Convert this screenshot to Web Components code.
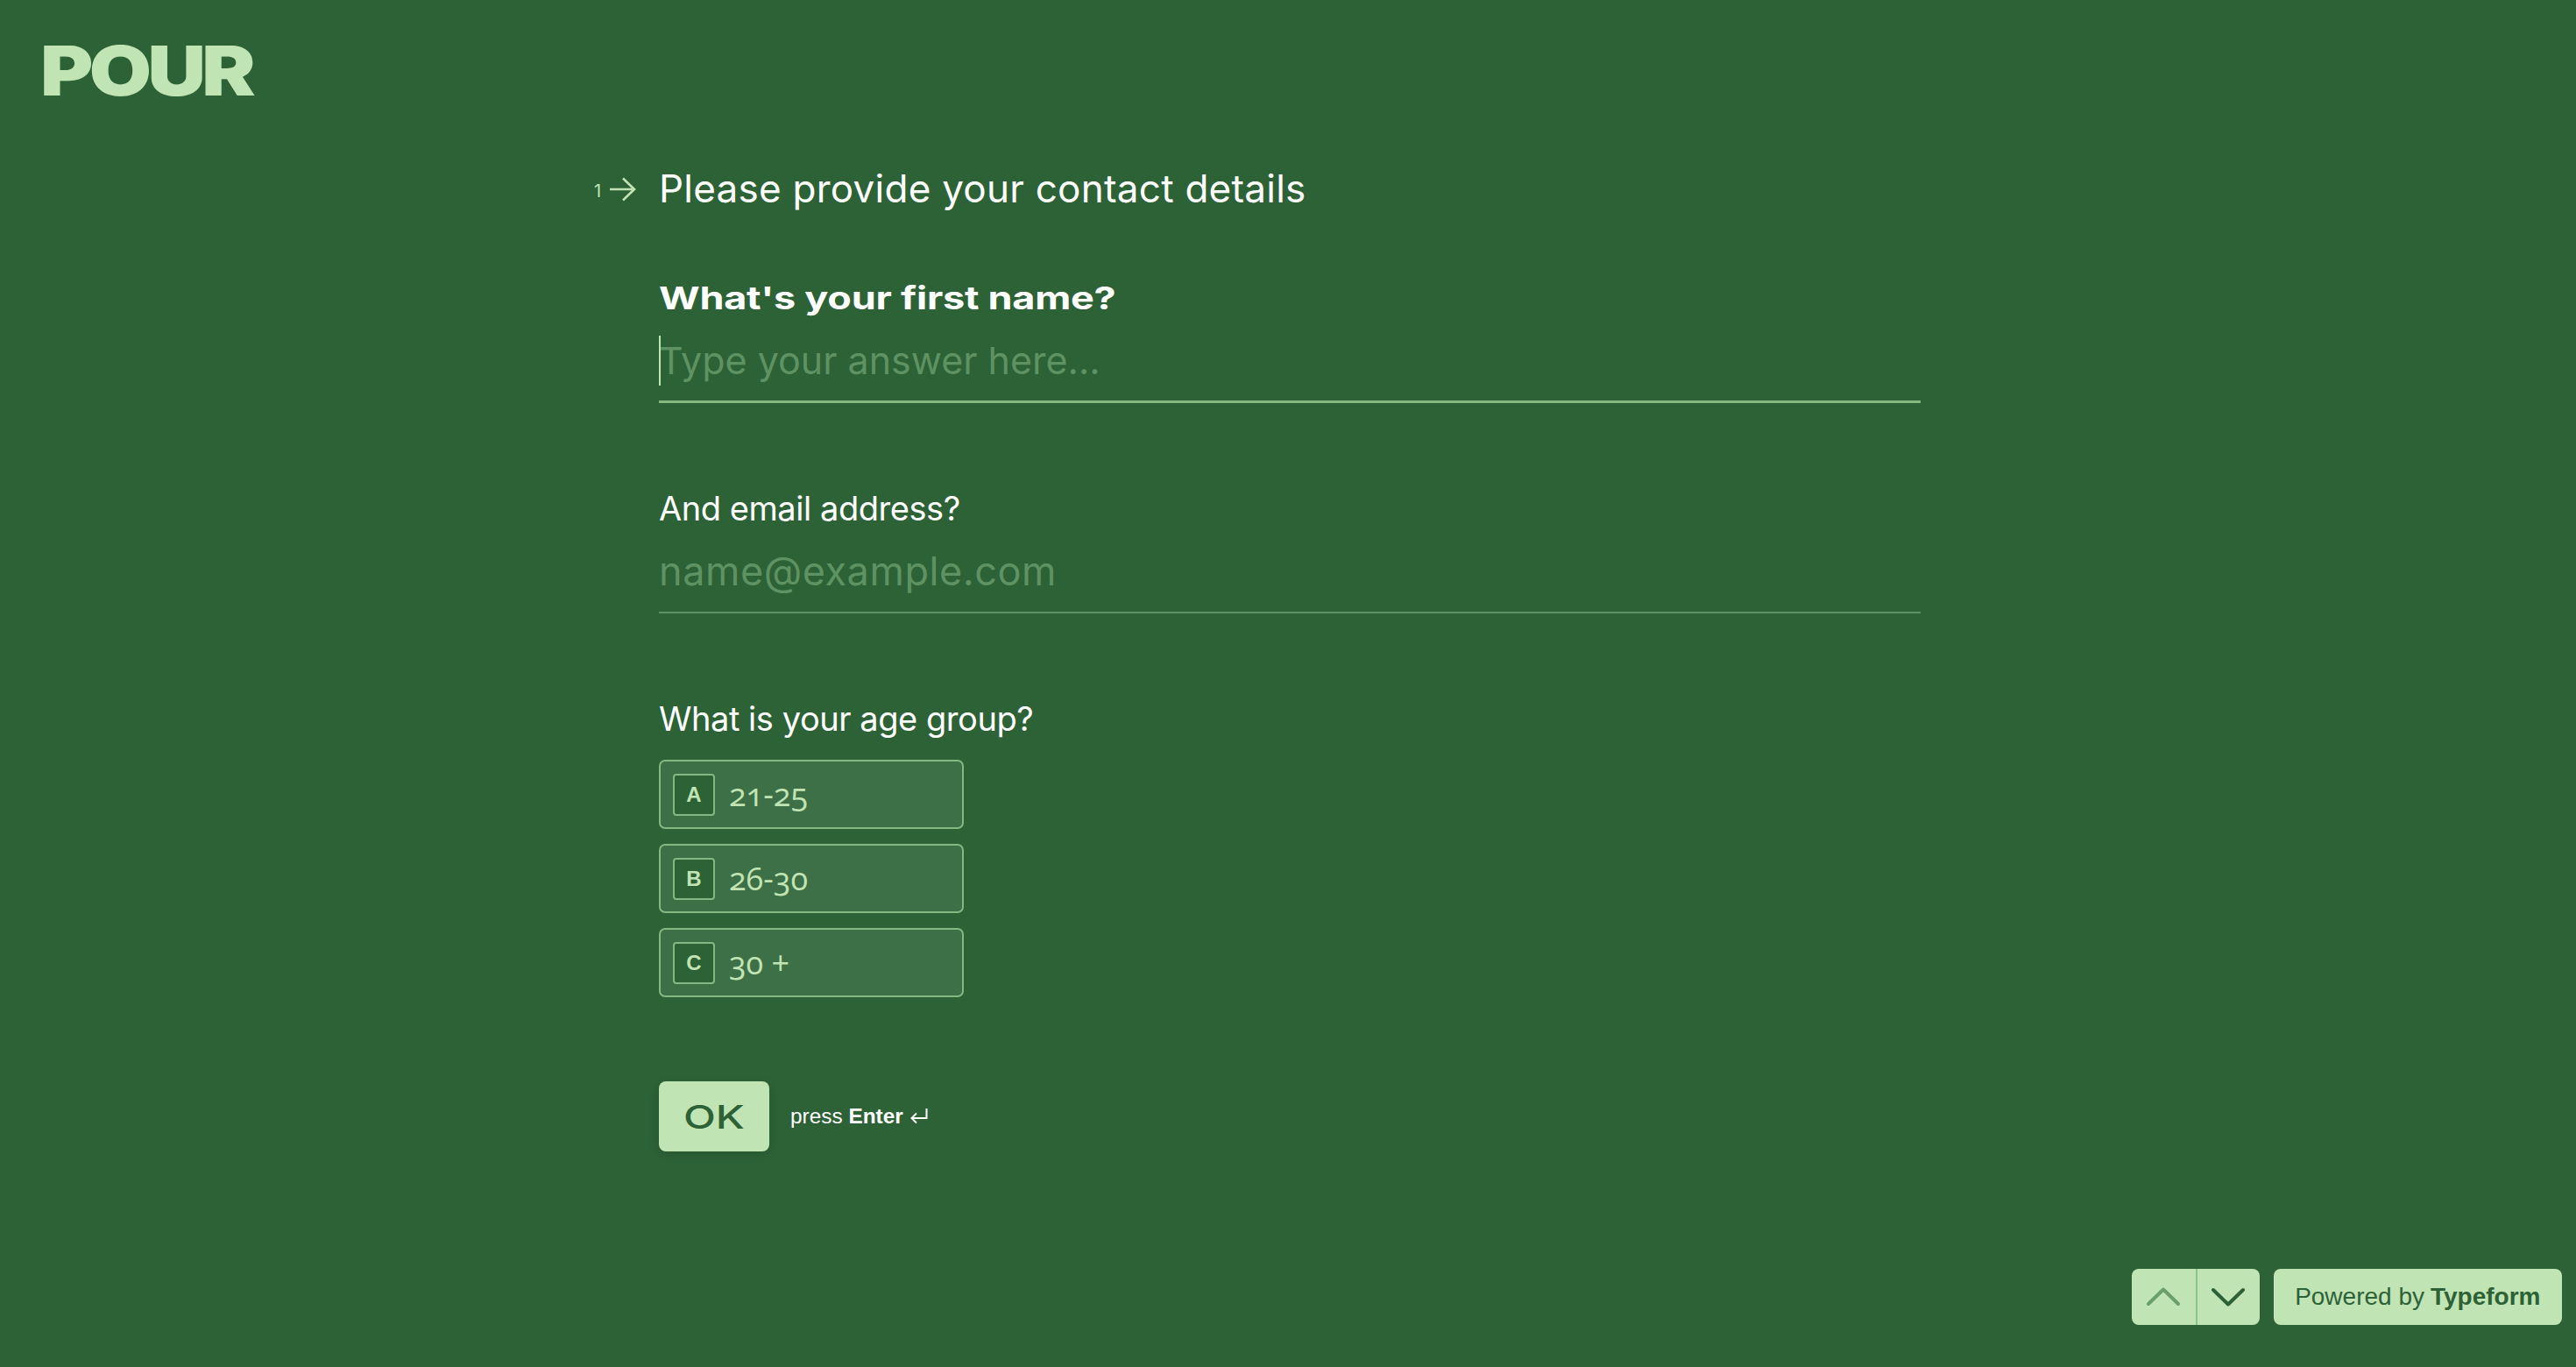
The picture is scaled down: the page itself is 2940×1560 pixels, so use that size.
<!DOCTYPE html>
<html lang="en">
<head>
<meta charset="utf-8">
<title>POUR</title>
<style>
  html, body { margin: 0; height: 100%; }
  body { background: #2d6136; color: #fff; font-family: Inter, "Liberation Sans", sans-serif; overflow: hidden; }
</style>
</head>
<body>
<pour-page>
  <pour-logo slot="header">POUR</pour-logo>
  <question-title number="1">Please provide your contact details</question-title>
  <text-field label="What's your first name?" placeholder="Type your answer here..." active></text-field>
  <text-field label="And email address?" placeholder="name@example.com" style="--tracking: 0.55px; --size: 45px"></text-field>
  <choice-list label="What is your age group?">
    <choice-option key="A">21-25</choice-option>
    <choice-option key="B">26-30</choice-option>
    <choice-option key="C">30 +</choice-option>
  </choice-list>
  <submit-row></submit-row>
  <form-footer slot="footer"></form-footer>
</pour-page>

<script>
function define(name, html, setup) {
  const template = document.createElement("template");
  template.innerHTML = html;
  customElements.define(name, class extends HTMLElement {
    constructor() {
      super();
      this.attachShadow({ mode: "open" });
      this.shadowRoot.appendChild(template.content.cloneNode(true));
    }
    connectedCallback() {
      if (setup) setup(this, this.shadowRoot);
    }
  });
}

define("pour-page", /* html */ `
  <style>
    :host { display: flex; flex-direction: column; height: 1560px; box-sizing: border-box; }
    header { height: 195px; padding: 44px 0 0 46px; box-sizing: border-box; }
    main { flex: 1; width: 1440px; margin-left: 752px; }
    footer { display: flex; justify-content: flex-end; padding: 0 16px 48px 0; }
  </style>
  <header><slot name="header"></slot></header>
  <main><slot></slot></main>
  <footer><slot name="footer"></slot></footer>
`);

define("pour-logo", /* html */ `
  <style>
    :host { display: block; height: 72px; color: #c1e4b5; }
    span {
      display: inline-block;
      font: 900 79px/72px Inter, sans-serif;
      letter-spacing: -4px;
      transform: scaleX(1.165);
      transform-origin: left center;
    }
  </style>
  <span><slot></slot></span>
`);

define("question-title", /* html */ `
  <style>
    :host { display: block; position: relative; height: 40px; margin-bottom: 81px; font: 400 44px/40px Inter, sans-serif; letter-spacing: 0.25px; }
    .num { position: absolute; left: -74px; top: 3px; display: flex; align-items: center; gap: 10px; color: #c1e4b5; font-size: 20px; letter-spacing: 0; line-height: 36px; }
    .num span { position: relative; top: 2px; }
    svg { width: 30px; height: 28px; }
  </style>
  <div class="num"><span id="n"></span>
    <svg viewBox="0 0 30 28" fill="none" stroke="#c1e4b5" stroke-width="2.6"><path d="M0 14H28M15 1.5L28 14L15 26.5"/></svg>
  </div>
  <slot></slot>
`, (el, root) => { root.getElementById("n").textContent = el.getAttribute("number"); });

define("text-field", /* html */ `
  <style>
    :host { display: block; margin-bottom: 97px; }
    .label { font: 400 38px/46px Inter, sans-serif; letter-spacing: -0.45px; height: 46px; }
    :host([active]) .label span { display: inline-block; font-weight: 700; font-size: 36px; letter-spacing: -0.2px; transform: scaleX(1.25); transform-origin: left center; }
    .input { position: relative; height: 88px; margin-top: 7px; border-bottom: 2px solid #5f9263; font: 400 var(--size, 43px)/84px Inter, sans-serif; letter-spacing: var(--tracking, 0); color: #5f9263; }
    :host([active]) .input { border-bottom: 3px solid #85b783; }
    .caret { display: none; position: absolute; left: 0; top: 14px; width: 2px; height: 57px; background: #c1e4b5; }
    :host([active]) .caret { display: block; }
  </style>
  <div class="label"><span id="l"></span></div>
  <div class="input"><i class="caret"></i><span id="p"></span></div>
`, (el, root) => {
  root.getElementById("l").textContent = el.getAttribute("label");
  root.getElementById("p").textContent = el.getAttribute("placeholder");
});

define("choice-list", /* html */ `
  <style>
    :host { display: block; margin-bottom: 96px; }
    .label { font: 400 38px/46px Inter, sans-serif; letter-spacing: -0.45px; margin-bottom: 24px; }
    .list { display: flex; flex-direction: column; gap: 17px; }
  </style>
  <div class="label" id="l"></div>
  <div class="list"><slot></slot></div>
`, (el, root) => { root.getElementById("l").textContent = el.getAttribute("label"); });

define("choice-option", /* html */ `
  <style>
    :host { display: flex; align-items: center; gap: 16px; box-sizing: border-box; width: 348px; height: 79px; padding: 0 14px; background: #3d7046; border: 2px solid #85b783; border-radius: 7px; color: #c1e4b5; }
    .key { display: flex; align-items: center; justify-content: center; box-sizing: border-box; width: 48px; height: 48px; background: #2d6136; border: 2px solid #85b783; border-radius: 4px; font: 700 24px "Liberation Sans", sans-serif; }
    .text { font: 400 36px "Open Sans", sans-serif; font-variant-numeric: oldstyle-nums; }
  </style>
  <span class="key" id="k"></span>
  <span class="text"><slot></slot></span>
`, (el, root) => { root.getElementById("k").textContent = el.getAttribute("key"); });

define("submit-row", /* html */ `
  <style>
    :host { display: flex; align-items: center; gap: 24px; }
    .ok { display: flex; align-items: center; justify-content: center; width: 126px; height: 80px; border-radius: 8px; background: #c1e4b5; color: #2d6136; box-shadow: 0 3px 12px rgba(0,0,0,.1); }
    .ok span { display: inline-block; font: 500 37px Inter, sans-serif; transform: scaleX(1.3); }
    .hint { display: flex; align-items: center; gap: 8px; font: 400 24.4px "Liberation Sans", sans-serif; color: #fff; }
    svg { width: 20px; height: 20px; }
  </style>
  <div class="ok"><span>OK</span></div>
  <div class="hint">
    <span>press <b>Enter</b></span>
    <svg viewBox="0 0 20 20" fill="none" stroke="#fff" stroke-width="2"><path d="M18.5 1V12H2M7 6.5L1.5 12L7 17.5"/></svg>
  </div>
`);

define("form-footer", /* html */ `
  <style>
    :host { display: flex; gap: 16px; font: 400 28px "Liberation Sans", sans-serif; color: #2d6136; }
    .nav { display: flex; height: 64px; border-radius: 8px; background: #c1e4b5; overflow: hidden; }
    .nav div { display: flex; align-items: center; justify-content: center; width: 73px; box-sizing: border-box; }
    .nav div + div { border-left: 2px solid #8fc28c; }
    svg { width: 40px; height: 24px; }
    .brand { display: flex; align-items: center; height: 64px; padding: 0 24.5px; border-radius: 8px; background: #c1e4b5; }
    b { margin-left: 7px; }
  </style>
  <div class="nav">
    <div><svg viewBox="0 0 40 24" fill="none" stroke="#6a9f6c" stroke-width="4" stroke-linecap="round" stroke-linejoin="round"><path d="M3 20L20 3.5L37 20"/></svg></div>
    <div><svg viewBox="0 0 40 24" fill="none" stroke="#2d6136" stroke-width="4" stroke-linecap="round" stroke-linejoin="round"><path d="M3 4L20 20.5L37 4"/></svg></div>
  </div>
  <div class="brand"><span>Powered by<b>Typeform</b></span></div>
`);
</script>
</body>
</html>
